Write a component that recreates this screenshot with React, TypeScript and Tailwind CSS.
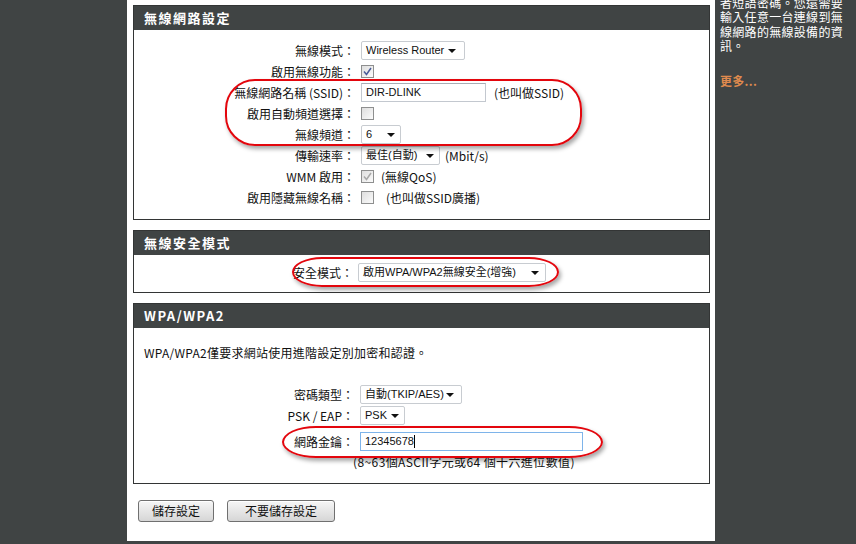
import React from 'react';

const FONT = "font-['Noto_Sans_CJK_TC','Liberation_Sans',sans-serif]";
const FIELD_FONT = "font-['Liberation_Sans','Noto_Sans_CJK_TC',sans-serif] text-[11px]";

const Arrow = () => (
    <svg width="8" height="4" viewBox="0 0 8 4" className="shrink-0">
        <polygon points="0,0 8,0 4,4" fill="#111" />
    </svg>
);

const Select = ({ value, width, pr = 'pr-[5px]' }: { value: string; width: string; pr?: string }) => (
    <div className={`${width} ${FIELD_FONT} ${pr} h-[19px] flex items-center justify-between pl-[4px] bg-white border border-[#c8ccd1] rounded-[2px] text-[#111] leading-none`}>
        <span className="whitespace-nowrap">{value}</span>
        <Arrow />
    </div>
);

const Checkbox = ({ checked, disabled }: { checked?: boolean; disabled?: boolean }) => (
    <div className="w-[13px] h-[13px] border border-[#8e8f8f] bg-gradient-to-br from-[#dedede] to-[#fbfbfb] flex items-center justify-center">
        {checked && (
            <svg width="9" height="9" viewBox="0 0 9 9">
                <path d="M1 4.5 L3.5 7.5 L8 1" fill="none" stroke={disabled ? '#a8a8a8' : '#4a5c98'} strokeWidth="1.5" />
            </svg>
        )}
    </div>
);

const Row = ({ label, children, labelW = 'w-[221px]', gap = 'ml-[6px]' }: { label: string; children: React.ReactNode; labelW?: string; gap?: string }) => (
    <div className="flex items-center h-[21px]">
        <div className={`${labelW} shrink-0 text-right whitespace-nowrap`}>{label}</div>
        <div className={`${gap} flex items-center`}>{children}</div>
    </div>
);

const Section = ({ title, children }: { title: string; children: React.ReactNode }) => (
    <div className="border border-[#333535] bg-white">
        <div className="h-[24px] bg-[#404444] flex items-center pl-[10px] text-white text-[13px] font-bold tracking-[1.5px]">
            {title}
        </div>
        {children}
    </div>
);

const Ring = ({ className }: { className: string }) => (
    <div className={`absolute border-2 border-[#e3060d] shadow-[2px_3px_4px_rgba(0,0,0,0.35)] pointer-events-none ${className}`} />
);

const Button = ({ label, width }: { label: string; width: string }) => (
    <button className={`${width} h-[22px] border border-[#707070] rounded-[3px] bg-gradient-to-b from-[#f6f6f6] to-[#d6d6d6] text-[12px] leading-none shadow-[inset_0_1px_0_#ffffff]`}>
        {label}
    </button>
);

export default function App() {
    return (
        <div className={`${FONT} w-[856px] h-[544px] bg-[#404444] flex overflow-hidden text-[12px] text-[#111]`}>
            {/* left bar */}
            <div className="w-[127px] shrink-0" />

            {/* main column */}
            <div className="relative w-[588px] h-[541px] shrink-0 bg-white pl-[6px] pt-[5px]">
                <div className="w-[577px]">
                    <Section title="無線網路設定">
                        <div className="pt-[10px] pb-[11px]">
                            <Row label="無線模式：">
                                <Select value="Wireless Router" width="w-[104px]" pr="pr-[8px]" />
                            </Row>
                            <Row label="啟用無線功能：">
                                <Checkbox checked />
                            </Row>
                            <Row label="無線網路名稱 (SSID)：">
                                <div className={`${FIELD_FONT} w-[125px] h-[19px] border border-[#c3c8cf] border-t-[#a8adb5] flex items-center pl-[4px]`}>DIR-DLINK</div>
                                <span className="ml-[8px]">(也叫做SSID)</span>
                            </Row>
                            <Row label="啟用自動頻道選擇：">
                                <Checkbox />
                            </Row>
                            <Row label="無線頻道：">
                                <Select value="6" width="w-[40px]" />
                            </Row>
                            <Row label="傳輸速率：">
                                <Select value="最佳(自動)" width="w-[79px]" />
                                <span className="ml-[5px]">(Mbit/s)</span>
                            </Row>
                            <Row label="WMM 啟用：">
                                <Checkbox checked disabled />
                                <span className="ml-[7px]">(無線QoS)</span>
                            </Row>
                            <Row label="啟用隱藏無線名稱：">
                                <Checkbox />
                                <span className="ml-[12px]">(也叫做SSID廣播)</span>
                            </Row>
                        </div>
                    </Section>

                    <div className="mt-[10px]">
                        <Section title="無線安全模式">
                            <div className="pt-[7px] pb-[9px]">
                                <Row label="安全模式：" labelW="w-[219px]" gap="ml-[5px]">
                                    <Select value="啟用WPA/WPA2無線安全(增強)" width="w-[188px]" pr="pr-[6px]" />
                                </Row>
                            </div>
                        </Section>
                    </div>

                    <div className="mt-[10px]">
                        <Section title="WPA/WPA2">
                            <div className="pt-[17px] pb-[13px]">
                                <div className="h-[16px] flex items-center pl-[10px] tracking-[0.25px]">WPA/WPA2僅要求網站使用進階設定別加密和認證。</div>
                                <div className="mt-[23px]">
                                    <Row label="密碼類型：" labelW="w-[220px]" gap="ml-[6px]">
                                        <Select value="自動(TKIP/AES)" width="w-[102px]" pr="pr-[7px]" />
                                    </Row>
                                    <Row label="PSK / EAP：" labelW="w-[220px]" gap="ml-[6px]">
                                        <Select value="PSK" width="w-[45px]" />
                                    </Row>
                                    <div className="mt-[5px]">
                                        <Row label="網路金鑰：" labelW="w-[220px]" gap="ml-[6px]">
                                            <div className={`${FIELD_FONT} w-[223px] h-[19px] border border-[#7eb4ea] flex items-center pl-[4px]`}>
                                                <span>12345678</span>
                                                <span className="w-px h-[13px] bg-black" />
                                            </div>
                                        </Row>
                                    </div>
                                    <div className="h-[16px] mt-[2px] flex items-center pl-[219px] whitespace-nowrap tracking-[0.4px]">(8~63個ASCII字元或64 個十六進位數值)</div>
                                </div>
                            </div>
                        </Section>
                    </div>

                    <div className="mt-[16px] pl-[5px] flex gap-[13px]">
                        <Button label="儲存設定" width="w-[76px]" />
                        <Button label="不要儲存設定" width="w-[108px]" />
                    </div>
                </div>

                {/* red highlight rings */}
                <Ring className="left-[98px] top-[79px] w-[357px] h-[67px] rounded-[30px]" />
                <Ring className="left-[165px] top-[257px] w-[267px] h-[30px] rounded-[30px/15px]" />
                <Ring className="left-[155px] top-[426px] w-[321px] h-[32px] rounded-[34px/16px]" />
            </div>

            {/* right help column */}
            <div className="flex-1 pl-[5px] text-white text-[12px] leading-[14.3px] tracking-[0.3px]">
                <div className="-mt-[4px] whitespace-nowrap">
                    者短語密碼。您還需要<br />
                    輸入任意一台連線到無<br />
                    線網路的無線設備的資<br />
                    訊。
                </div>
                <div className="mt-[21px] text-[#df8a4e] font-bold">更多...</div>
            </div>
        </div>
    );
}
